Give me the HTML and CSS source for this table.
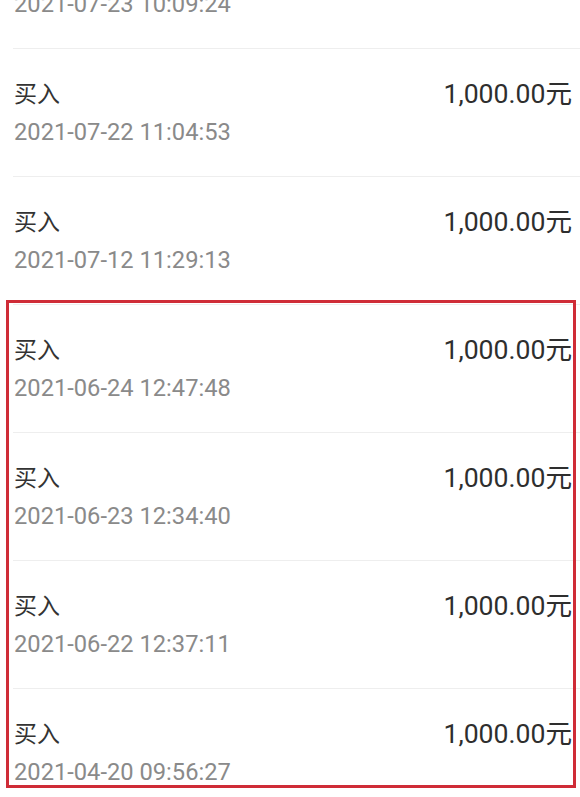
FILE: index.html
```html
<!DOCTYPE html>
<html lang="zh-CN">
<head>
<meta charset="utf-8">
<link rel="stylesheet" href="styles.css">
</head>
<body>
<div class="list">
  <div class="row"><div class="info"><div class="title">买入</div><div class="date">2021-07-23 10:09:24</div></div><div class="amount">1,000.00元</div></div>
  <div class="row"><div class="info"><div class="title">买入</div><div class="date">2021-07-22 11:04:53</div></div><div class="amount">1,000.00元</div></div>
  <div class="row"><div class="info"><div class="title">买入</div><div class="date">2021-07-12 11:29:13</div></div><div class="amount">1,000.00元</div></div>
  <div class="row"><div class="info"><div class="title">买入</div><div class="date">2021-06-24 12:47:48</div></div><div class="amount">1,000.00元</div></div>
  <div class="row"><div class="info"><div class="title">买入</div><div class="date">2021-06-23 12:34:40</div></div><div class="amount">1,000.00元</div></div>
  <div class="row"><div class="info"><div class="title">买入</div><div class="date">2021-06-22 12:37:11</div></div><div class="amount">1,000.00元</div></div>
  <div class="row"><div class="info"><div class="title">买入</div><div class="date">2021-04-20 09:56:27</div></div><div class="amount">1,000.00元</div></div>
</div>
<div class="highlight"></div>
</body>
</html>
```
FILE: styles.css
```css
html, body {
  margin: 0;
  padding: 0;
  background: #ffffff;
  overflow: hidden;
}
body {
  width: 580px;
  height: 797px;
  position: relative;
  font-family: Roboto, "Noto Sans CJK SC", sans-serif;
}
.list {
  margin-top: -79px;
}
.row {
  display: flex;
  justify-content: space-between;
  align-items: flex-start;
  height: 127px;
  box-sizing: content-box;
  margin-left: 13px;
  padding: 0 8px 0 1px;
  border-bottom: 1px solid #eeeeee;
}
.info {
  padding-top: 32px;
}
.title {
  font-family: "Noto Sans CJK SC", sans-serif;
  font-size: 23px;
  line-height: 23px;
  color: #333333;
}
.date {
  margin-top: 16px;
  font-size: 23.7px;
  line-height: 24px;
  color: #8a8a8a;
}
.amount {
  padding-top: 32px;
  font-size: 26.6px;
  line-height: 26px;
  color: #2e2e2e;
  font-family: Roboto, "Noto Sans CJK SC", sans-serif;
}
.highlight {
  position: absolute;
  left: 6px;
  top: 300px;
  width: 564px;
  height: 482px;
  border: 3px solid #cf2c37;
}
```
